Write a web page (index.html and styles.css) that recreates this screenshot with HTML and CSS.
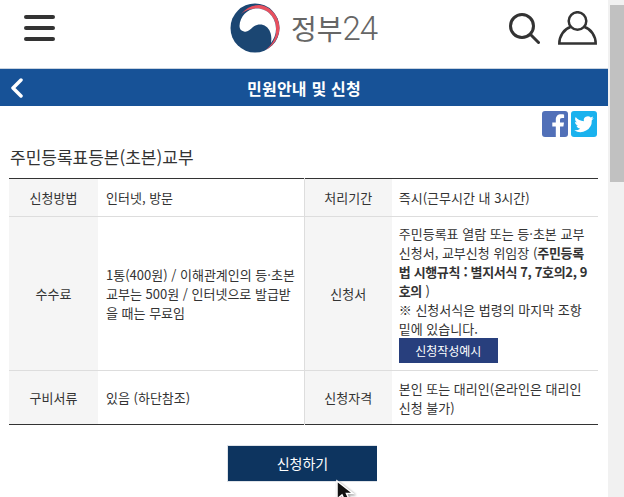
FILE: index.html

```html
<!DOCTYPE html>
<html lang="ko">
<head>
    <meta charset="UTF-8">
    <meta name="viewport" content="width=device-width, initial-scale=1.0">
    <title>정부24 - 민원안내 및 신청</title>
    <link rel="stylesheet" href="styles.css">
</head>
<body>
    <div class="page">
        <header class="top">
            <button class="menu" aria-label="메뉴"><span></span><span></span><span></span></button>
            <div class="logo">
                <svg class="mark" width="50" height="50" viewBox="0 0 50 50">
                    <circle cx="25" cy="25" r="24.5" fill="#1b4672"/>
                    <path d="M11 11C16 5 22 2 29 2 41 3 49.500 14 49.500 25 49.500 34 44 42 36 47 42 42 47 34 46 25 46 15 38 5.500 27 5.500 21 5.500 15 7.500 11 11z" fill="#e8505f"/>
                    <path d="M9.500 23C10 13 18 5.500 27 5.500 38 5.500 46 15 46 26 46 31 44 36 41 40 42 34 41 27 36 23.500 32 20.500 27 21 23 24 20 27 17 29.500 14 28.500 11 28 9.500 26 9.500 23z" fill="#fff"/>
                </svg>
                <span class="logo-text">정부<span class="logo-num">24</span></span>
            </div>
            <div class="top-icons">
                <svg width="31" height="31" viewBox="0 0 31 31" fill="none" stroke="#333" stroke-width="3">
                    <circle cx="13" cy="13" r="11.500"/>
                    <path d="M21.500 21.500l8 8" stroke-linecap="round"/>
                </svg>
                <svg width="39" height="34" viewBox="0 0 39 34" fill="none" stroke="#333" stroke-width="2.500">
                    <circle cx="19.500" cy="10" r="8.800"/>
                    <path d="M12.500 16C6 18 1.300 25 1.300 32.500h36.400C37.700 25 33 18 26.500 16"/>
                </svg>
            </div>
        </header>

        <div class="bar">
            <svg class="back" width="14" height="20" viewBox="0 0 14 20" fill="none" stroke="#fff" stroke-width="3.500" stroke-linecap="round" stroke-linejoin="round">
                <path d="M11 2L3 10l8 8"/>
            </svg>
            <h2>민원안내 및 신청</h2>
        </div>

        <div class="share">
            <span class="sns fb"><svg width="26" height="26" viewBox="0 0 26 26"><path d="M18 26V15.500h3.400l.6-4h-4V9c0-1.200.4-2 2-2h2.100V3.400C21.700 3.300 20.500 3.200 19 3.200c-3.100 0-5.200 1.900-5.200 5.300v3h-3.500v4h3.500V26z" fill="#fff"/></svg></span>
            <span class="sns tw"><svg width="26" height="26" viewBox="0 0 24 24"><path d="M21 6.500c-.7.300-1.400.5-2.100.6.800-.5 1.300-1.200 1.600-2-.7.400-1.500.7-2.300.9a3.700 3.700 0 0 0-6.300 3.400C8.800 9.200 6.100 7.700 4.300 5.500c-1 1.700-.5 3.800 1.100 4.900-.6 0-1.200-.2-1.700-.5 0 1.800 1.300 3.300 3 3.700-.5.100-1.100.2-1.700.1.500 1.500 1.900 2.500 3.500 2.600A7.500 7.500 0 0 1 3 17.800a10.500 10.500 0 0 0 16.200-9.300c.7-.5 1.300-1.200 1.800-2z" fill="#fff"/></svg></span>
        </div>

        <h3 class="title">주민등록표등본(초본)교부</h3>

        <table class="info">
            <tr class="r1">
                <th>신청방법</th>
                <td>인터넷, 방문</td>
                <th>처리기간</th>
                <td>즉시(근무시간 내 3시간)</td>
            </tr>
            <tr>
                <th>수수료</th>
                <td>1통(400원) / 이해관계인의 등·초본 교부는 500원 / 인터넷으로 발급받을 때는 무료임</td>
                <th>신청서</th>
                <td>주민등록표 열람 또는 등·초본 교부 신청서, 교부신청 위임장 (<b>주민등록법 시행규칙 : 별지서식 7, 7호의2, 9호의</b> )<br>※ 신청서식은 법령의 마지막 조항 밑에 있습니다.<br><a class="sample">신청작성예시</a></td>
            </tr>
            <tr class="r3">
                <th>구비서류</th>
                <td>있음 (하단참조)</td>
                <th>신청자격</th>
                <td>본인 또는 대리인(온라인은 대리인 신청 불가)</td>
            </tr>
        </table>

        <div class="apply"><a class="apply-btn">신청하기</a></div>

        <svg class="cursor" width="24" height="24" viewBox="0 0 24 24">
            <path d="M2 2v18l5-4 4 8 4-2-3.500-7.500H18z" fill="#111" stroke="#fff" stroke-width="1.500"/>
        </svg>
    </div>
    <div class="scroll"><div class="thumb"></div></div>
</body>
</html>
```

FILE: styles.css

```css
html, body {
    margin: 0;
    height: 100%;
    overflow: hidden;
}
body {
    display: flex;
    font-family: "Noto Sans CJK KR", "Liberation Sans", sans-serif;
    color: #333;
    background-color: #fff;
}
.page {
    position: relative;
    flex: 1;
    min-width: 0;
}
.scroll {
    width: 16px;
    background-color: #f1f1f1;
    padding-top: 5px;
    box-sizing: border-box;
}
.thumb {
    margin-left: 2px;
    height: 177px;
    background-color: #c1c1c1;
}

.top {
    display: flex;
    align-items: center;
    height: 68px;
    padding: 0 11px 12px 24px;
    box-sizing: border-box;
}
.menu {
    display: flex;
    flex-direction: column;
    gap: 7px;
    width: 31px;
    padding: 0;
    border: none;
    background: none;
}
.menu span {
    height: 4px;
    background-color: #333;
    border-radius: 2px;
}
.logo {
    display: flex;
    align-items: center;
    gap: 11px;
    margin-left: 175px;
}
.mark {
    display: block;
}
.logo-text {
    font-size: 28px;
    line-height: 40px;
    color: #666;
}
.logo-num {
    font-family: Roboto, sans-serif;
    font-size: 33px;
    font-weight: 300;
    letter-spacing: -1px;
}
.top-icons {
    display: flex;
    align-items: center;
    gap: 18px;
    margin-left: auto;
}

.bar {
    position: relative;
    display: flex;
    align-items: center;
    justify-content: center;
    height: 37px;
    border-top: 1px solid #c9d3df;
    background-color: #175297;
}
.bar h2 {
    margin: 0;
    font-size: 16px;
    font-weight: 700;
    letter-spacing: 0.200px;
    color: #fff;
}
.back {
    position: absolute;
    left: 10px;
    top: 9px;
}

.share {
    display: flex;
    justify-content: flex-end;
    gap: 3px;
    padding: 5px 11px 0 0;
}
.sns {
    display: block;
    width: 26px;
    height: 26px;
    border-radius: 3px;
    overflow: hidden;
}
.sns svg {
    display: block;
}
.fb {
    background-color: #5170b8;
}
.tw {
    background-color: #1ab2ee;
}

.title {
    margin: 8px 10px 9px;
    font-size: 17px;
    line-height: 24px;
    font-weight: 400;
    color: #333;
}

.info {
    width: 589px;
    margin-left: 9px;
    border-collapse: collapse;
    table-layout: fixed;
    border-top: 1px solid #333;
    border-bottom: 1px solid #333;
    font-size: 13px;
    line-height: 19px;
}
.info th {
    font-weight: 400;
    background-color: #f5f5f5;
    text-align: center;
    padding: 0;
}
.info th:first-child {
    width: 89px;
}
.info th:nth-child(3) {
    width: 87px;
    border-left: 1px solid #ddd;
}
.info td {
    padding: 7px 8px;
    word-break: break-all;
}
.info td:last-child {
    padding-left: 7px;
}
.info b {
    letter-spacing: -0.350px;
}
.info tr + tr th,
.info tr + tr td {
    border-top: 1px solid #ddd;
}
.r1 td {
    height: 23px;
}
.r3 td {
    height: 39px;
}
.sample {
    display: block;
    width: 99px;
    height: 25px;
    line-height: 25px;
    font-size: 12px;
    text-align: center;
    color: #fff;
    background-color: #283f7d;
}

.apply {
    display: flex;
    justify-content: center;
    padding: 20px 4px 0 0;
}
.apply-btn {
    display: block;
    width: 150px;
    height: 37px;
    line-height: 35px;
    box-sizing: border-box;
    border: 1px solid #dfe3e8;
    border-width: 1px 0 1px 1px;
    text-align: center;
    font-size: 14px;
    color: #fff;
    background-color: #0d345f;
}
.cursor {
    position: absolute;
    left: 335px;
    top: 479px;
    filter: drop-shadow(1px 1px 1px #888);
}
```
